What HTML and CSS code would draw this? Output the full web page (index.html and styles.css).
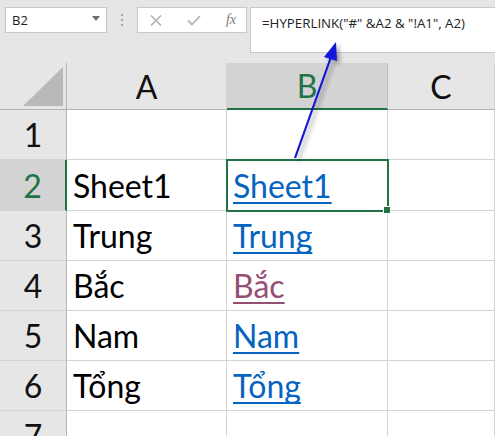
FILE: index.html
```html
<!DOCTYPE html>
<html>
<head>
<meta charset="utf-8">
<link rel="stylesheet" href="styles.css">
</head>
<body>
<div class="toolbar">
  <div class="namebox"><span>B2</span><svg class="caret" width="8" height="5" viewBox="0 0 8 5"><path d="M0 0H8L4 5Z" fill="#6d6d6d"/></svg></div>
  <div class="dots"><i></i><i></i><i></i></div>
  <div class="fbuttons">
    <svg width="12" height="11" viewBox="0 0 12 11"><path d="M1 0.5L11 10.5M11 0.5L1 10.5" stroke="#b4b4b4" stroke-width="1.6"/></svg>
    <svg width="14" height="11" viewBox="0 0 14 11"><path d="M1 5.5L5 9.5L13 1" stroke="#b4b4b4" stroke-width="1.8" fill="none"/></svg>
    <span class="fx">fx</span>
  </div>
  <div class="formula">=HYPERLINK("#" &amp;A2 &amp; "!A1", A2)</div>
</div>
<div class="grid">
  <div class="corner"><div class="tri"></div></div>
  <div class="colh">A</div>
  <div class="colh sel">B</div>
  <div class="colh">C</div>

  <div class="rowh">1</div><div class="cell"></div><div class="cell"></div><div class="cell"></div>
  <div class="rowh sel">2</div><div class="cell">Sheet1</div><div class="cell active"><a>Sheet1</a></div><div class="cell"></div>
  <div class="rowh">3</div><div class="cell">Trung</div><div class="cell"><a>Trung</a></div><div class="cell"></div>
  <div class="rowh">4</div><div class="cell">Bắc</div><div class="cell"><a class="visited">Bắc</a></div><div class="cell"></div>
  <div class="rowh">5</div><div class="cell">Nam</div><div class="cell"><a>Nam</a></div><div class="cell"></div>
  <div class="rowh">6</div><div class="cell">Tổng</div><div class="cell"><a>Tổng</a></div><div class="cell"></div>
  <div class="rowh">7</div><div class="cell"></div><div class="cell"></div><div class="cell"></div>
</div>
<svg class="arrow" width="495" height="436" viewBox="0 0 495 436">
  <defs>
    <filter id="sh" x="-50%" y="-50%" width="200%" height="200%">
      <feDropShadow dx="3" dy="3" stdDeviation="2" flood-color="#000" flood-opacity="0.35"/>
    </filter>
  </defs>
  <g filter="url(#sh)">
    <line x1="295" y1="158" x2="331" y2="57" stroke="#1414d8" stroke-width="2.2"/>
    <polygon points="336,42 337,61 324,57" fill="#1414d8"/>
  </g>
</svg>
</body>
</html>
```
FILE: styles.css
```css
html, body {
  margin: 0;
  padding: 0;
}
body {
  width: 495px;
  height: 436px;
  overflow: hidden;
  background: #e6e6e6;
  position: relative;
  font-family: "Lato", "Noto Sans", sans-serif;
}
.toolbar {
  height: 63px;
  box-sizing: border-box;
  padding: 7px 0 0 5px;
  display: flex;
  align-items: flex-start;
  background: #e6e6e6;
}
.namebox {
  width: 102px;
  height: 26px;
  box-sizing: border-box;
  background: #fff;
  border: 1px solid #c8c8c8;
  display: flex;
  align-items: center;
  justify-content: space-between;
  padding: 0 6px 0 6px;
  font-family: "Open Sans", "Noto Sans", sans-serif;
  font-size: 13px;
  color: #222;
}
.namebox .caret {
  margin-top: -3px;
}
.dots {
  width: 30px;
  height: 26px;
  display: flex;
  flex-direction: column;
  align-items: center;
  justify-content: center;
  gap: 3px;
}
.dots i {
  display: block;
  width: 2px;
  height: 2px;
  background: #a8a8a8;
}
.fbuttons {
  width: 110px;
  height: 26px;
  box-sizing: border-box;
  background: #fff;
  border: 1px solid #c8c8c8;
  display: flex;
  align-items: center;
  padding: 0 10px 0 12px;
  justify-content: space-between;
}
.fx {
  font-family: "Liberation Serif", serif;
  font-style: italic;
  font-size: 14px;
  color: #7a7a7a;
}
.formula {
  margin-left: 3px;
  flex: 1;
  height: 46px;
  box-sizing: border-box;
  background: #fff;
  border: 1px solid #c8c8c8;
  border-right: none;
  padding: 6px 0 0 11px;
  font-family: "Open Sans", "Noto Sans", sans-serif;
  font-size: 13.3px;
  color: #222;
}
.grid {
  display: grid;
  grid-template-columns: 67px 160px 161px 107px;
  grid-template-rows: 47px 50px 51px 50px 50px 50px 50px 50px;
  background: #fff;
  font-size: 32px;
}
.corner {
  background: #e6e6e6;
  border-right: 1px solid #b4b4b4;
  border-bottom: 1px solid #b4b4b4;
  display: flex;
  justify-content: flex-end;
  align-items: flex-end;
  padding: 0 3px 3px 0;
}
.tri {
  width: 40px;
  height: 39px;
  background: #b9b9b9;
  clip-path: polygon(100% 0, 100% 100%, 0 100%);
}
.colh {
  background: #e6e6e6;
  border-right: 1px solid #d0d0d0;
  border-bottom: 1px solid #b4b4b4;
  display: flex;
  align-items: center;
  justify-content: center;
  color: #111;
}
.colh.sel {
  background: #d3d3d3;
  color: #217346;
  border-bottom: 2px solid #217346;
  border-right-color: #bcbcbc;
}
.rowh {
  background: #e6e6e6;
  border-right: 1px solid #b4b4b4;
  border-bottom: 1px solid #d4d4d4;
  display: flex;
  align-items: center;
  justify-content: center;
  color: #111;
}
.rowh.sel {
  background: #d3d3d3;
  color: #217346;
  border-right: 2px solid #217346;
}
.cell {
  border-right: 1px solid #d4d4d4;
  border-bottom: 1px solid #d4d4d4;
  display: flex;
  align-items: center;
  padding-left: 6px;
  color: #000;
  position: relative;
}
.cell a {
  color: #0563c1;
  text-decoration: underline;
  text-decoration-thickness: 2px;
  text-underline-offset: 4px;
  text-decoration-skip-ink: none;
}
.cell a.visited {
  color: #954f72;
}
.cell.active {
  outline: 2px solid #217346;
  outline-offset: -1px;
  z-index: 1;
}
.cell.active::after {
  content: "";
  position: absolute;
  right: -4px;
  bottom: -4px;
  width: 6px;
  height: 6px;
  background: #217346;
  border: 1px solid #fff;
}
.arrow {
  position: absolute;
  left: 0;
  top: 0;
  pointer-events: none;
  z-index: 5;
}
```
